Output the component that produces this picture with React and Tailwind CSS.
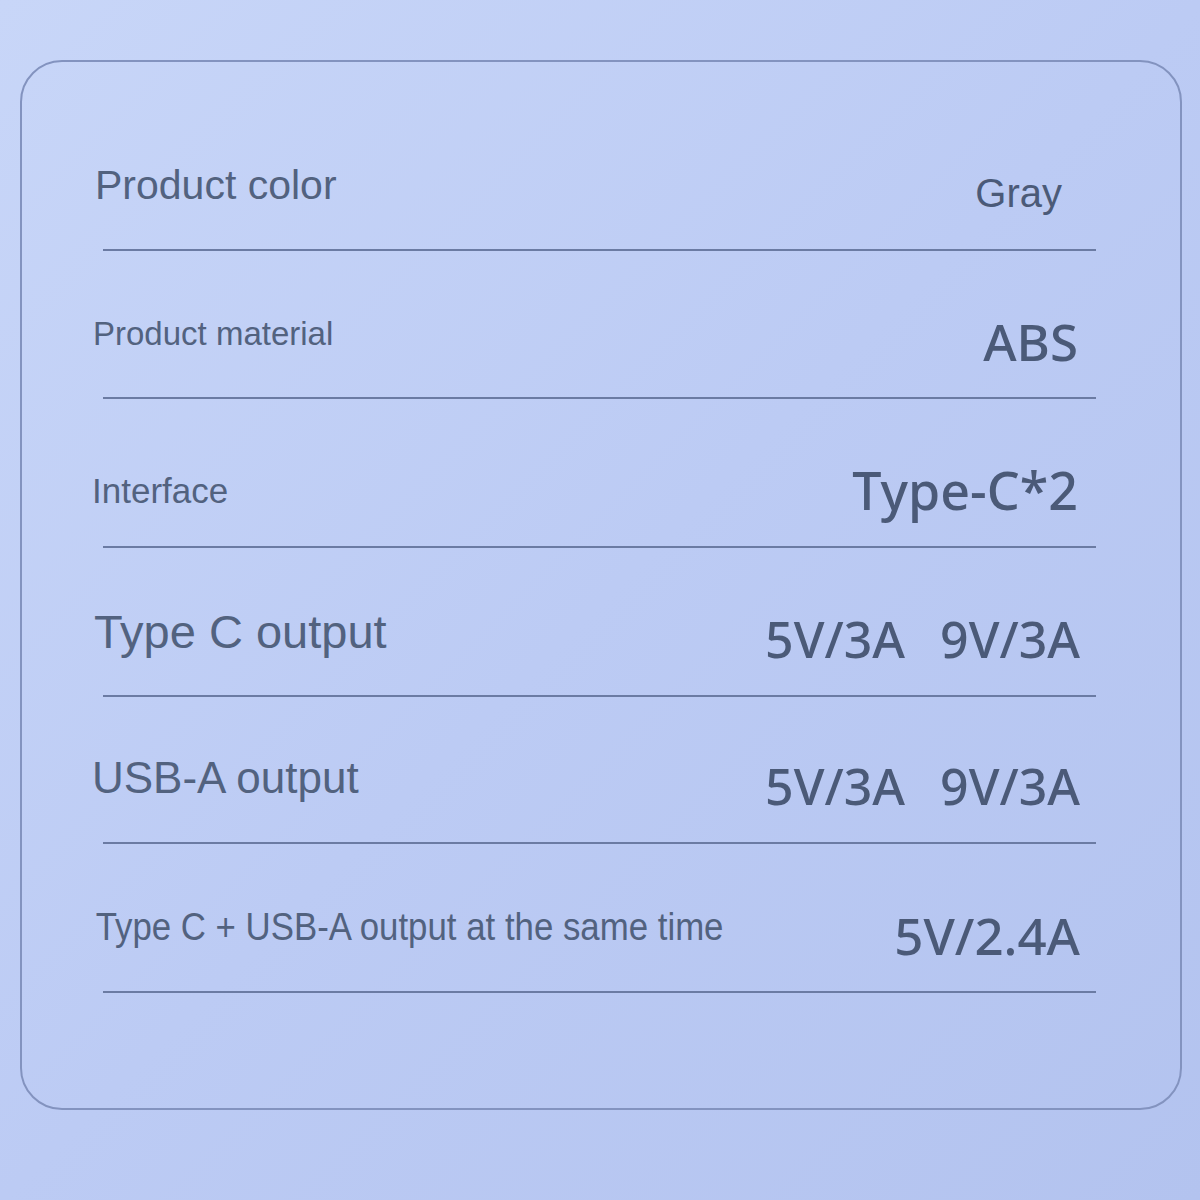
const rows = [
  {
    label: "Product color",
    labelClass: "pl-[3px] pb-4 text-[41px]",
    value: ["Gray"],
    valueClass: "pr-[118px] font-['Liberation_Sans',Arial,sans-serif] text-[40px] font-normal",
    gap: "mt-0",
  },
  {
    label: "Product material",
    labelClass: "pl-[1px] pb-4 text-[33px]",
    value: ["ABS"],
    valueClass: "pr-[102px] font-['Noto_Sans',sans-serif] font-medium text-[51px]",
    gap: "mt-[34px]",
  },
  {
    label: "Interface",
    labelClass: "pl-0 pb-0 text-[35px]",
    value: ["Type-C*2"],
    valueClass: "pr-[102px] font-['Noto_Sans',sans-serif] font-medium text-[52px]",
    gap: "mt-[35px]",
  },
  {
    label: "Type C output",
    labelClass: "pl-[2px] pb-4 text-[47px]",
    value: ["5V/3A", "9V/3A"],
    valueClass: "pr-[100px] font-['Noto_Sans',sans-serif] font-medium text-[50px]",
    gap: "mt-[35px]",
  },
  {
    label: "USB-A output",
    labelClass: "pl-0 pb-4 text-[44px]",
    value: ["5V/3A", "9V/3A"],
    valueClass: "pr-[100px] font-['Noto_Sans',sans-serif] font-medium text-[50px]",
    gap: "mt-[33px]",
  },
  {
    label: "Type C + USB-A output at the same time",
    labelClass: "pl-[4px] pb-4 text-[38px] origin-left scale-x-[0.916]",
    value: ["5V/2.4A"],
    valueClass: "pr-[100px] font-['Noto_Sans',sans-serif] font-medium text-[51px]",
    gap: "mt-[35px]",
  },
];

function SpecRow({ row }) {
  return (
    <div className={row.gap}>
      <div className="flex h-[112px] items-center justify-between pl-[70px]">
        <span
          className={`inline-block whitespace-nowrap leading-none text-[#52627f] font-['Liberation_Sans',Arial,sans-serif] ${row.labelClass}`}
        >
          {row.label}
        </span>
        <span
          className={`flex gap-[35px] leading-none text-[#4b5a78] ${row.valueClass}`}
        >
          {row.value.map((v) => (
            <span key={v}>{v}</span>
          ))}
        </span>
      </div>
      <div className="ml-[81px] h-[2px] w-[993px] bg-[#6b7ba3]" />
    </div>
  );
}

export default function App() {
  return (
    <div className="h-[1200px] w-[1200px] overflow-hidden bg-gradient-to-br from-[#c8d6f8] via-[#bccbf4] to-[#b3c3ef] pt-[60px]">
      <div className="ml-[20px] h-[1050px] w-[1162px] rounded-[42px] border-2 border-[#8393bf] pt-[75px]">
        {rows.map((row) => (
          <SpecRow key={row.label} row={row} />
        ))}
      </div>
    </div>
  );
}
